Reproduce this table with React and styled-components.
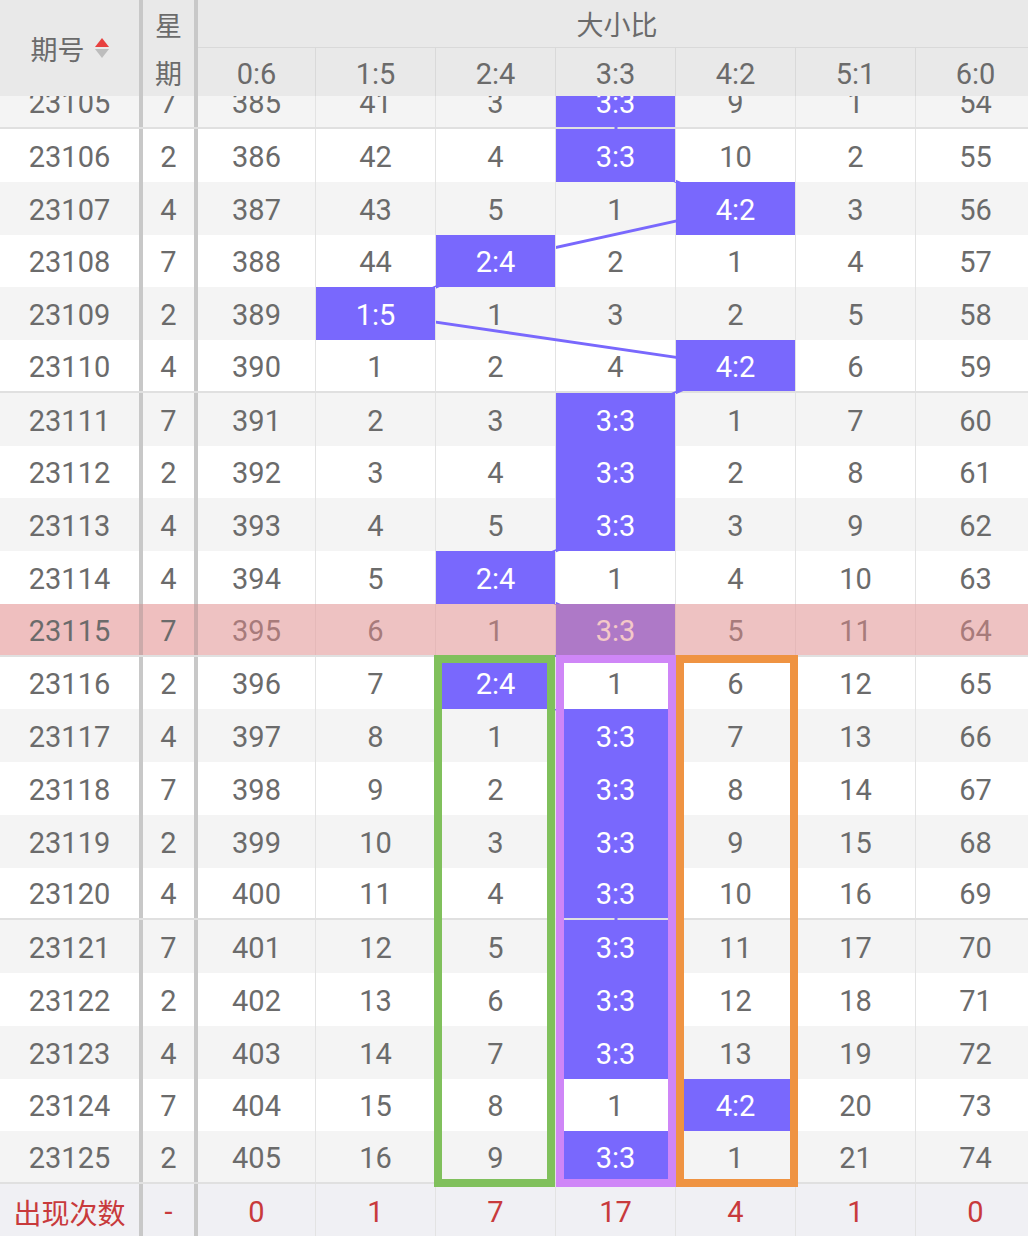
import React from "react";
import styled, { createGlobalStyle, css } from "styled-components";

const ROW_H = 52.75;
const COLS = "143px 55px 118px repeat(6, 120px)";
const BLUE = "#7968fd";
const TEXT = "#6b6b6b";
const DIVIDER = "#c8c8c8";
const LINE = "#e3e3e3";

const RATIOS = ["0:6", "1:5", "2:4", "3:3", "4:2", "5:1", "6:0"];
const COUNTS = [0, 1, 7, 17, 4, 1, 0];

// omission values of the first visible draw; the rest is derived from the hits
const START = [385, 41, 3, 0, 9, 1, 54];

// [issue, weekday, index of the ratio that came out]
const DRAWS = [
  [23105, 7, 3],
  [23106, 2, 3],
  [23107, 4, 4],
  [23108, 7, 2],
  [23109, 2, 1],
  [23110, 4, 4],
  [23111, 7, 3],
  [23112, 2, 3],
  [23113, 4, 3],
  [23114, 4, 2],
  [23115, 7, 3],
  [23116, 2, 2],
  [23117, 4, 3],
  [23118, 7, 3],
  [23119, 2, 3],
  [23120, 4, 3],
  [23121, 7, 3],
  [23122, 2, 3],
  [23123, 4, 3],
  [23124, 7, 4],
  [23125, 2, 3],
];

const HIGHLIGHT_ISSUE = 23115;

const BOXES = [
  { left: 434, width: 121, color: "#80c05c" },
  { left: 556, width: 120, color: "#cf86f7" },
  { left: 676, width: 122, color: "#ef9342" },
];

const buildRows = () => {
  let prev = null;
  return DRAWS.map(([issue, week, hit], i) => {
    const values = i === 0 ? START : prev.map((v, c) => (c === hit ? 0 : v + 1));
    prev = values;
    return { issue, week, hit, values };
  });
};

const colCenter = (c) => (c === 0 ? 198 + 59 : 316 + (c - 1) * 120 + 60);

const GlobalStyle = createGlobalStyle`
  html, body {
    margin: 0;
    padding: 0;
    background: #fff;
  }
  body {
    font-family: Roboto, "Noto Sans CJK SC", sans-serif;
  }
`;

const Page = styled.div`
  width: 1028px;
  height: 1236px;
  overflow: hidden;
  display: flex;
  flex-direction: column;
  background: #fff;
  color: ${TEXT};
`;

const Header = styled.div`
  position: relative;
  z-index: 3;
  flex-shrink: 0;
  display: grid;
  grid-template-columns: ${COLS};
  grid-template-rows: 48px 48px;
  background: #e9e9e9;
  font-family: "Noto Sans CJK SC", sans-serif;
  font-size: 27px;
`;

const HeadIssue = styled.div`
  grid-row: 1 / span 2;
  display: flex;
  align-items: center;
  justify-content: center;
  gap: 10px;
  border-right: 4px solid ${DIVIDER};
`;

const HeadWeek = styled.div`
  grid-row: 1 / span 2;
  display: flex;
  flex-direction: column;
  border-right: 4px solid ${DIVIDER};

  span {
    flex: 1;
    display: flex;
    align-items: center;
    justify-content: center;
  }
`;

const HeadGroup = styled.div`
  grid-column: 3 / span 7;
  display: flex;
  align-items: center;
  justify-content: center;
  border-bottom: 1px solid #d9d9d9;
`;

const HeadRatio = styled.div`
  display: flex;
  align-items: center;
  justify-content: center;
  border-right: 1px solid #d9d9d9;
  font-family: Roboto, sans-serif;
  font-size: 29px;
  padding-top: 4px;
`;

const Body = styled.div`
  flex: 1;
  min-height: 0;
  display: flex;
  flex-direction: column;
  justify-content: flex-end;
`;

const Track = styled.div`
  position: relative;
  z-index: 2;
  flex-shrink: 0;
`;

const Row = styled.div`
  box-sizing: border-box;
  height: ${ROW_H}px;
  display: grid;
  grid-template-columns: ${COLS};
  background: ${(p) => (p.$alt ? "#f4f4f4" : "#fff")};
  border-bottom: ${(p) => (p.$groupEnd ? "2px solid #e0e0e0" : "none")};

  ${(p) =>
    p.$highlight &&
    css`
      position: relative;

      &::after {
        content: "";
        position: absolute;
        left: 198px;
        right: 0;
        top: 0;
        bottom: 0;
        background: rgba(232, 140, 140, 0.48);
        z-index: 3;
        pointer-events: none;
      }
    `}
`;

const Cell = styled.div`
  box-sizing: border-box;
  display: flex;
  align-items: center;
  justify-content: center;
  padding-top: 3px;
  border-right: 1px solid ${LINE};
  font-size: 29px;

  ${(p) =>
    p.$hit &&
    css`
      position: relative;
      z-index: 2;
      background: ${BLUE};
      color: #fff;
    `}
`;

const SideCell = styled(Cell)`
  border-right: 4px solid ${(p) => (p.$highlight ? "#ccaaaa" : DIVIDER)};
  background: ${(p) => (p.$highlight ? "#efbfbf" : "transparent")};
`;

const TrendLine = styled.svg`
  position: absolute;
  left: 0;
  top: 0;
  z-index: 1;
  pointer-events: none;
`;

const Frame = styled.div`
  position: absolute;
  top: ${11 * ROW_H - 1.5}px;
  left: ${(p) => p.$left}px;
  width: ${(p) => p.$width}px;
  height: 532px;
  box-sizing: border-box;
  border: 8px solid ${(p) => p.$color};
  z-index: 4;
  pointer-events: none;
`;

const Footer = styled.div`
  position: relative;
  z-index: 1;
  flex-shrink: 0;
  height: 52px;
  display: grid;
  grid-template-columns: ${COLS};
  background: #f0f0f4;
  color: #c83a3c;
`;

const FooterLabel = styled(SideCell)`
  font-family: "Noto Sans CJK SC", sans-serif;
  font-size: 28px;
`;

const SortIcon = () => (
  <svg width="14" height="20" viewBox="0 0 14 20">
    <polygon points="7,0 14,9 0,9" fill="#e8413f" />
    <polygon points="0,11 14,11 7,20" fill="#bdbdbd" />
  </svg>
);

const App = () => {
  const rows = buildRows();
  const trackH = rows.length * ROW_H;
  const points = rows.map((r, i) => `${colCenter(r.hit)},${i * ROW_H + ROW_H / 2}`).join(" ");

  return (
    <Page>
      <GlobalStyle />
      <Header>
        <HeadIssue>
          期号
          <SortIcon />
        </HeadIssue>
        <HeadWeek>
          <span>星</span>
          <span>期</span>
        </HeadWeek>
        <HeadGroup>大小比</HeadGroup>
        {RATIOS.map((r) => (
          <HeadRatio key={r}>{r}</HeadRatio>
        ))}
      </Header>

      <Body>
        <Track style={{ height: trackH }}>
          {rows.map((r) => {
            const highlight = r.issue === HIGHLIGHT_ISSUE;
            return (
              <Row key={r.issue} $alt={r.issue % 2 === 1} $groupEnd={r.issue % 5 === 0} $highlight={highlight}>
                <SideCell $highlight={highlight}>{r.issue}</SideCell>
                <SideCell $highlight={highlight}>{r.week}</SideCell>
                {r.values.map((v, c) => (
                  <Cell key={c} $hit={c === r.hit}>
                    {c === r.hit ? RATIOS[c] : v}
                  </Cell>
                ))}
              </Row>
            );
          })}
          <TrendLine width="1036" height={trackH}>
            <polyline points={points} fill="none" stroke={BLUE} strokeWidth="3" />
          </TrendLine>
          {BOXES.map((b) => (
            <Frame key={b.left} $left={b.left} $width={b.width} $color={b.color} />
          ))}
        </Track>
      </Body>

      <Footer>
        <FooterLabel>出现次数</FooterLabel>
        <SideCell>-</SideCell>
        {COUNTS.map((n, i) => (
          <Cell key={i}>{n}</Cell>
        ))}
      </Footer>
    </Page>
  );
};

export default App;
